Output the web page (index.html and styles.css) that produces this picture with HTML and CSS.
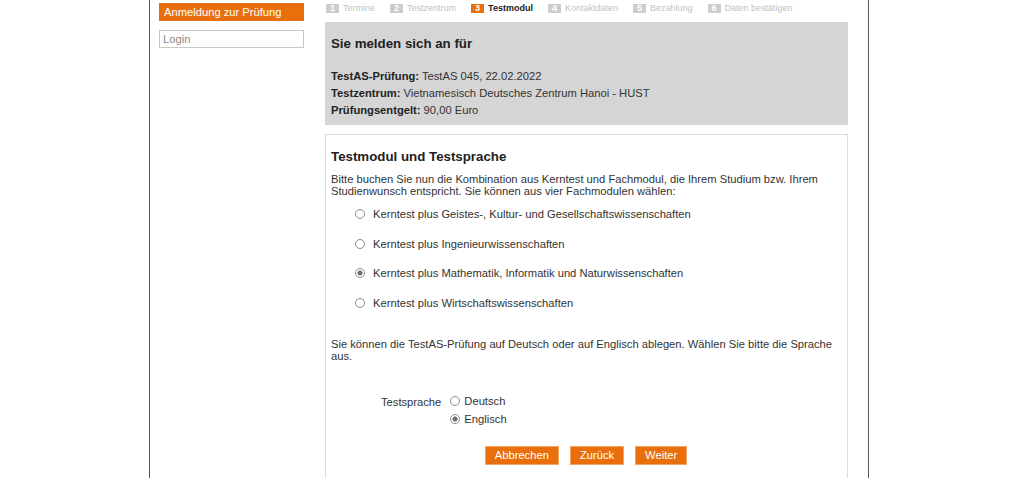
FILE: index.html
```html
<!DOCTYPE html>
<html lang="de">
<head>
    <meta charset="UTF-8">
    <meta name="viewport" content="width=device-width, initial-scale=1.0">
    <title>TestAS Anmeldung - Testmodul</title>
    <link rel="stylesheet" href="styles.css">
</head>
<body>
    <div class="page">
        <aside class="sidebar">
            <div class="nav-active">Anmeldung zur Prüfung</div>
            <div class="login">Login</div>
        </aside>

        <main class="main">
            <ol class="steps">
                <li class="step"><span class="num">1</span>Termine</li>
                <li class="step"><span class="num">2</span>Testzentrum</li>
                <li class="step current"><span class="num">3</span>Testmodul</li>
                <li class="step"><span class="num">4</span>Kontaktdaten</li>
                <li class="step"><span class="num">5</span>Bezahlung</li>
                <li class="step"><span class="num">6</span>Daten bestätigen</li>
            </ol>

            <section class="summary">
                <h2>Sie melden sich an für</h2>
                <p class="info"><b>TestAS-Prüfung:</b> TestAS 045, 22.02.2022</p>
                <p class="info"><b>Testzentrum:</b> Vietnamesisch Deutsches Zentrum Hanoi - HUST</p>
                <p class="info"><b>Prüfungsentgelt:</b> 90,00 Euro</p>
            </section>

            <form class="module">
                <h2>Testmodul und Testsprache</h2>
                <p>Bitte buchen Sie nun die Kombination aus Kerntest und Fachmodul, die Ihrem Studium bzw. Ihrem Studienwunsch entspricht. Sie können aus vier Fachmodulen wählen:</p>

                <div class="choices">
                    <label class="choice"><input type="radio" name="modul">Kerntest plus Geistes-, Kultur- und Gesellschaftswissenschaften</label>
                    <label class="choice"><input type="radio" name="modul">Kerntest plus Ingenieurwissenschaften</label>
                    <label class="choice"><input type="radio" name="modul" checked>Kerntest plus Mathematik, Informatik und Naturwissenschaften</label>
                    <label class="choice"><input type="radio" name="modul">Kerntest plus Wirtschaftswissenschaften</label>
                </div>

                <p class="lang-note">Sie können die TestAS-Prüfung auf Deutsch oder auf Englisch ablegen. Wählen Sie bitte die Sprache aus.</p>

                <div class="lang-row">
                    <span class="lang-label">Testsprache</span>
                    <div class="lang-options">
                        <label><input type="radio" name="sprache">Deutsch</label>
                        <label><input type="radio" name="sprache" checked>Englisch</label>
                    </div>
                </div>

                <div class="buttons">
                    <button type="button">Abbrechen</button>
                    <button type="button">Zurück</button>
                    <button type="button">Weiter</button>
                </div>
            </form>
        </main>
    </div>
</body>
</html>
```

FILE: styles.css
```css
body {
    margin: 0;
    font-family: "Liberation Sans", Arial, sans-serif;
    font-size: 11.2px;
    color: #333;
    background: #fff;
}

.page {
    display: flex;
    width: 718px;
    min-height: 478px;
    margin-left: 149px;
    border-left: 1px solid #555;
    border-right: 1px solid #555;
}

/* left column */
.sidebar {
    width: 145px;
    padding: 3px 0 0 9px;
    margin-right: 21px;
}

.nav-active {
    background: #e96f0c;
    color: #fff;
    line-height: 18px;
    padding-left: 5px;
}

.login {
    margin-top: 9px;
    border: 1px solid #c8c8c8;
    line-height: 16px;
    padding-left: 3px;
    color: #8a8a8a;
}

.main {
    width: 523px;
}

/* progress steps */
.steps {
    list-style: none;
    box-sizing: border-box;
    margin: 0;
    padding: 1px 0 0 1px;
    height: 22px;
    display: flex;
    align-items: flex-start;
    gap: 15px;
    font-size: 9px;
    color: #c2c2c2;
}

.step {
    display: flex;
    align-items: center;
    gap: 4px;
    height: 14px;
}

.num {
    background: #cdcdcd;
    color: #fff;
    font-weight: bold;
    padding: 0 4px;
    height: 9px;
    line-height: 9px;
}

.step.current {
    color: #222;
    font-weight: bold;
}

.step.current .num {
    background: #e96f0c;
}

h2 {
    font-size: 13.3px;
    color: #222;
    margin: 0;
}

p {
    margin: 0;
}

/* booking summary */
.summary {
    background: #d5d5d5;
    padding: 14px 6px 6px;
}

.summary h2 {
    margin-bottom: 17px;
}

.info {
    line-height: 17px;
}

.info b {
    color: #222;
}

/* module form */
.module {
    margin-top: 9px;
    border: 1px solid #dcdcdc;
    padding: 14px 6px 30px 5px;
}

.module h2 {
    margin-bottom: 9px;
}

.choices {
    margin-top: 2px;
}

.choice {
    display: flex;
    align-items: center;
    gap: 8px;
    height: 29.7px;
    padding-left: 24px;
}

input[type="radio"] {
    appearance: none;
    -webkit-appearance: none;
    box-sizing: border-box;
    width: 10px;
    height: 10px;
    margin: 0;
    border: 1px solid #8d8d8d;
    border-radius: 50%;
    background: #fff;
}

input[type="radio"]:checked {
    background: radial-gradient(circle, #6f6f6f 0 2.3px, #fff 2.8px);
}

.lang-note {
    margin-top: 20px;
}

.lang-row {
    display: flex;
    margin-top: 30px;
    padding-left: 50px;
    line-height: 18px;
}

.lang-label {
    margin-right: 9px;
    padding-top: 1px;
}

.lang-options label {
    display: flex;
    align-items: center;
    gap: 4px;
}

.buttons {
    display: flex;
    justify-content: center;
    gap: 11px;
    margin-top: 18px;
}

.buttons button {
    font: inherit;
    background: #e96f0c;
    color: #fff;
    border: 1px solid #f3a566;
    padding: 0 9px;
    height: 19px;
    line-height: 17px;
}
```
